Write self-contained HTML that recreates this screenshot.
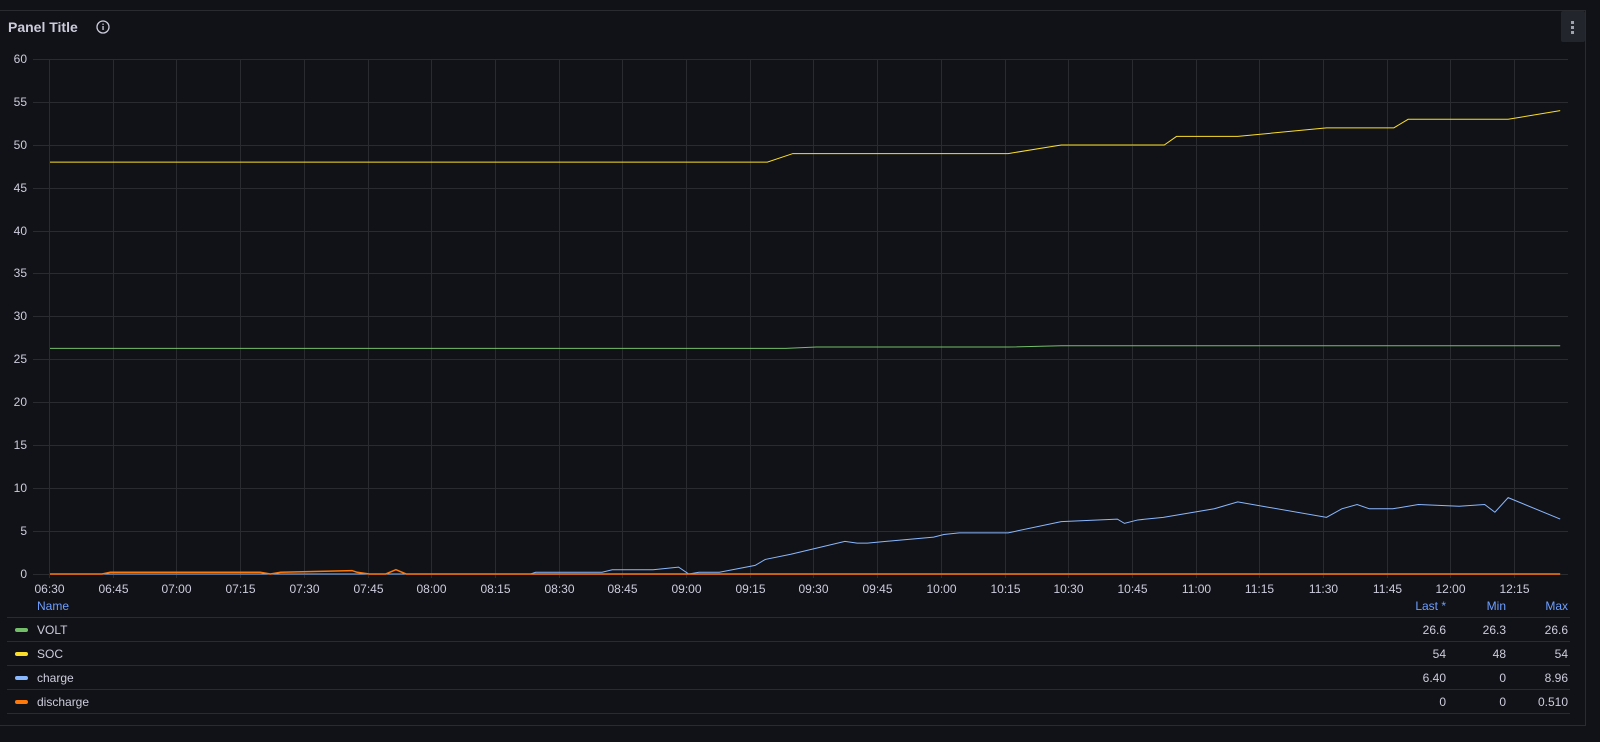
<!DOCTYPE html>
<html><head><style>
body{margin:0;background:#111217;width:1600px;height:742px;overflow:hidden;font-family:"Liberation Sans",sans-serif;color:#ccccdc;position:relative}
.panel{position:absolute;left:-1px;top:10px;width:1587px;height:716px;border:1px solid #2a2b31;box-sizing:border-box;border-left:none}
.title{position:absolute;left:8px;top:19px;font-size:14px;font-weight:bold;color:#ccccdc}
.menu{position:absolute;left:1561px;top:11px;width:24px;height:31px;background:#22252b;border-radius:2px}
.menu i{position:absolute;left:10px;width:3px;height:3px;background:#9fa3ad}
.lg{position:absolute;font-size:12px}
.row{position:absolute;left:7px;width:1563px;height:23px;border-bottom:1px solid #2a2b31}
.row span{position:absolute;top:5px}
.sw{position:absolute;left:8px;top:10px;width:13px;height:4px;border-radius:2px}
.r{text-align:right}
</style></head><body>
<div class="panel"></div>
<div class="title">Panel Title</div>
<svg style="position:absolute;left:95px;top:19px" width="16" height="16" viewBox="0 0 16 16"><circle cx="8" cy="8" r="6" fill="none" stroke="#ccccdc" stroke-width="1.3"/><rect x="7.4" y="7" width="1.3" height="4" fill="#ccccdc"/><rect x="7.4" y="4.6" width="1.3" height="1.3" fill="#ccccdc"/></svg>
<div class="menu"><i style="top:10px"></i><i style="top:15px"></i><i style="top:20px"></i></div>
<svg style="position:absolute;left:0;top:0" width="1600" height="742">
<g stroke="#2a2b30" stroke-width="1">
<line x1="33" x2="1568" y1="59.5" y2="59.5"/><line x1="33" x2="1568" y1="102.5" y2="102.5"/><line x1="33" x2="1568" y1="145.5" y2="145.5"/><line x1="33" x2="1568" y1="188.5" y2="188.5"/><line x1="33" x2="1568" y1="231.5" y2="231.5"/><line x1="33" x2="1568" y1="273.5" y2="273.5"/><line x1="33" x2="1568" y1="316.5" y2="316.5"/><line x1="33" x2="1568" y1="359.5" y2="359.5"/><line x1="33" x2="1568" y1="402.5" y2="402.5"/><line x1="33" x2="1568" y1="445.5" y2="445.5"/><line x1="33" x2="1568" y1="488.5" y2="488.5"/><line x1="33" x2="1568" y1="531.5" y2="531.5"/><line x1="33" x2="1568" y1="574.5" y2="574.5"/>
</g>
<g stroke="#2a2b30" id="vg"></g>
<g font-size="12" fill="#ccccdc" text-anchor="end" font-family="Liberation Sans">
<text x="27" y="63">60</text><text x="27" y="106">55</text><text x="27" y="149">50</text><text x="27" y="192">45</text><text x="27" y="235">40</text><text x="27" y="277">35</text><text x="27" y="320">30</text><text x="27" y="363">25</text><text x="27" y="406">20</text><text x="27" y="449">15</text><text x="27" y="492">10</text><text x="27" y="535">5</text><text x="27" y="578">0</text>
</g>
<g id="xl" font-size="12" fill="#ccccdc" text-anchor="middle" font-family="Liberation Sans"></g>
<g transform="matrix(1.0204,0,0,-8.58,0,574)" fill="none" stroke-width="1" >
<polyline vector-effect="non-scaling-stroke" stroke="#73bf69" points="49,26.3 770,26.3 800,26.45 988,26.45 1040,26.6 1529,26.6"/>
<polyline vector-effect="non-scaling-stroke" stroke="#fade2a" points="49,48 752,48 777,49 988,49 1040,50 1141,50 1153,51 1213,51 1300,52 1366,52 1380,53 1478,53 1529,54"/>
<polyline vector-effect="non-scaling-stroke" stroke="#8ab8ff" points="49,0 520,0 525,0.2 590,0.2 600,0.5 640,0.5 665,0.8 675,0 685,0.2 705,0.2 740,1 750,1.7 775,2.3 828,3.8 840,3.6 850,3.6 915,4.3 925,4.6 940,4.8 988,4.8 1040,6.1 1095,6.4 1102,5.9 1115,6.3 1140,6.6 1190,7.6 1213,8.4 1300,6.6 1315,7.6 1330,8.1 1342,7.6 1365,7.6 1390,8.1 1430,7.9 1455,8.1 1465,7.2 1478,8.9 1529,6.4"/>
<polyline vector-effect="non-scaling-stroke" stroke="#ff780a" stroke-width="1.5" points="49,0 100,0 108,0.2 255,0.2 265,0 275,0.2 345,0.4 350,0.2 362,0 378,0 388,0.5 398,0 1529,0"/>
</g>
</svg>
<script>
var vg=document.getElementById('vg'),xl=document.getElementById('xl'),ns='http://www.w3.org/2000/svg';
var t=["06:30","06:45","07:00","07:15","07:30","07:45","08:00","08:15","08:30","08:45","09:00","09:15","09:30","09:45","10:00","10:15","10:30","10:45","11:00","11:15","11:30","11:45","12:00","12:15"];
t.forEach(function(s,i){var x=Math.round(49+i*63.7)+0.5;var l=document.createElementNS(ns,'line');l.setAttribute('x1',x);l.setAttribute('x2',x);l.setAttribute('y1',59);l.setAttribute('y2',578);vg.appendChild(l);
var tx=document.createElementNS(ns,'text');tx.setAttribute('x',x);tx.setAttribute('y',593);tx.textContent=s;xl.appendChild(tx);});
</script>
<div class="lg" style="left:0;top:0">
<div class="row" style="top:594px"><span style="left:30px;color:#6e9fff">Name</span><span class="r" style="right:124px;color:#6e9fff">Last *</span><span class="r" style="right:64px;color:#6e9fff">Min</span><span class="r" style="right:2px;color:#6e9fff">Max</span></div>
<div class="row" style="top:618px"><div class="sw" style="background:#73bf69"></div><span style="left:30px">VOLT</span><span style="right:124px">26.6</span><span style="right:64px">26.3</span><span style="right:2px">26.6</span></div>
<div class="row" style="top:642px"><div class="sw" style="background:#fade2a"></div><span style="left:30px">SOC</span><span style="right:124px">54</span><span style="right:64px">48</span><span style="right:2px">54</span></div>
<div class="row" style="top:666px"><div class="sw" style="background:#8ab8ff"></div><span style="left:30px">charge</span><span style="right:124px">6.40</span><span style="right:64px">0</span><span style="right:2px">8.96</span></div>
<div class="row" style="top:690px"><div class="sw" style="background:#ff780a"></div><span style="left:30px">discharge</span><span style="right:124px">0</span><span style="right:64px">0</span><span style="right:2px">0.510</span></div>
</div>
</body></html>
